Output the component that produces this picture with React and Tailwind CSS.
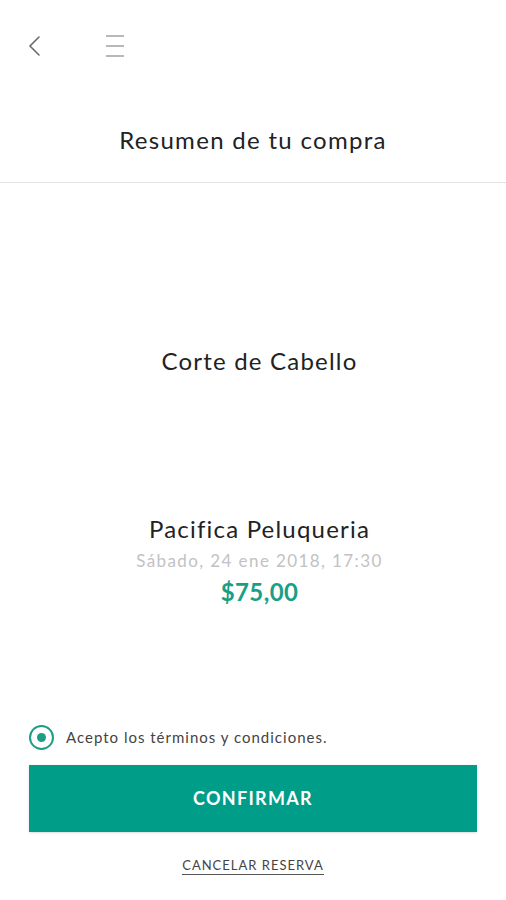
import React from 'react';

export default function App() {
  return (
    <div
      className="w-[506px] h-[900px] bg-white text-[#222] flex flex-col"
      style={{ fontFamily: 'Lato, "Open Sans", sans-serif' }}
    >
      {/* top bar */}
      <div className="h-[92px] flex items-start pt-[34px] px-[24px] gap-[62px]">
        <button className="w-[20px] h-[24px] flex items-center justify-center">
          <svg width="14" height="22" viewBox="0 0 14 22" fill="none">
            <path d="M12 2 L3 11 L12 20" stroke="#6b6b6b" strokeWidth="1.6" strokeLinecap="round" />
          </svg>
        </button>
        <button className="w-[22px] h-[24px] flex flex-col justify-between py-[1px]">
          <span className="block h-[2px] w-[18px] bg-[#b8b8b8]" />
          <span className="block h-[2px] w-[18px] bg-[#b8b8b8]" />
          <span className="block h-[2px] w-[18px] bg-[#b8b8b8]" />
        </button>
      </div>

      {/* title */}
      <div className="h-[91px] flex items-center justify-center border-b border-[#e2e2e2]">
        <h1 className="text-[24px] text-[#222] tracking-[1.3px] pt-[6px]">Resumen de tu compra</h1>
      </div>

      {/* service */}
      <div className="flex-1 flex flex-col items-center pl-[13px]">
        <p className="mt-[160px] text-[24px] text-[#222] tracking-[1.2px]">Corte de Cabello</p>

        <div className="mt-[135px] flex flex-col items-center">
          <p className="text-[24px] text-[#222] leading-[30px] tracking-[1.2px]">Pacifica Peluqueria</p>
          <p className="mt-[1px] text-[17px] text-[#c2c2c2] leading-[32px] tracking-[1.4px]">Sábado, 24 ene 2018, 17:30</p>
          <p className="text-[24px] font-bold text-[#1a9e85] leading-[30px] tracking-[0.4px]">$75,00</p>
        </div>
      </div>

      {/* terms */}
      <div className="px-[29px]">
        <label className="flex items-center gap-[12px] mb-[15px]">
          <span className="w-[25px] h-[25px] rounded-full border-2 border-[#1a9e85] flex items-center justify-center">
            <span className="w-[9px] h-[9px] rounded-full bg-[#1a9e85]" />
          </span>
          <span className="text-[15px] text-[#444] tracking-[1px]">Acepto los términos y condiciones.</span>
        </label>
        <button className="w-full h-[67px] bg-[#009d88] text-white text-[18px] font-bold tracking-[1.3px] shadow-sm">
          CONFIRMAR
        </button>
        <div className="flex justify-center pt-[24px] pb-[25px]">
          <span className="text-[13px] text-[#444] tracking-[1px] border-b border-[#555] leading-[18px]">
            CANCELAR RESERVA
          </span>
        </div>
      </div>
    </div>
  );
}
